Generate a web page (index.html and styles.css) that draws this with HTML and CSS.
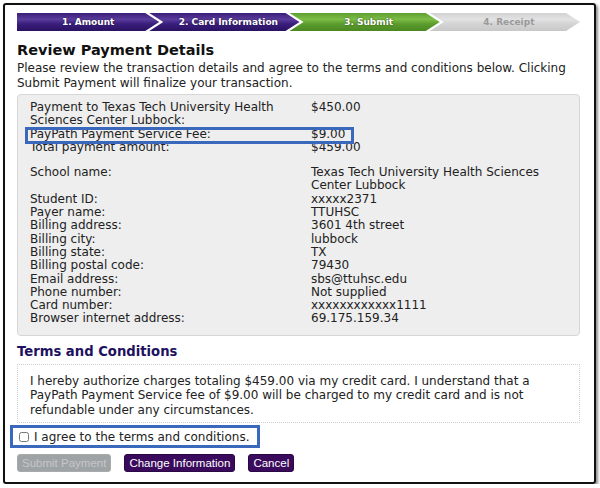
FILE: index.html
```html
<!DOCTYPE html>
<html lang="en">
  <head>
    <meta charset="UTF-8" />
    <meta name="viewport" content="width=device-width, initial-scale=1.0" />
    <title>Review Payment Details</title>
    <link rel="stylesheet" href="styles.css">
  </head>
  <body>
    <div class="frame">
      <div class="steps">
        <div class="step done">1. Amount</div>
        <div class="step done">2. Card Information</div>
        <div class="step current">3. Submit</div>
        <div class="step todo">4. Receipt</div>
      </div>

      <h1 class="title">Review Payment Details</h1>
      <p class="intro">
        Please review the transaction details and agree to the terms and conditions below. Clicking
        Submit Payment will finalize your transaction.
      </p>

      <div class="details">
        <div class="highlight fee-mark"></div>
        <div class="grid">
          <div class="label">Payment to Texas Tech University Health Sciences Center Lubbock:</div>
          <div class="value">$450.00</div>
          <div class="label">PayPath Payment Service Fee:</div>
          <div class="value">$9.00</div>
          <div class="label">Total payment amount:</div>
          <div class="value">$459.00</div>
        </div>
        <div class="grid spaced">
          <div class="label">School name:</div>
          <div class="value">Texas Tech University Health Sciences Center Lubbock</div>
          <div class="label">Student ID:</div>
          <div class="value">xxxxx2371</div>
          <div class="label">Payer name:</div>
          <div class="value">TTUHSC</div>
          <div class="label">Billing address:</div>
          <div class="value">3601 4th street</div>
          <div class="label">Billing city:</div>
          <div class="value">lubbock</div>
          <div class="label">Billing state:</div>
          <div class="value">TX</div>
          <div class="label">Billing postal code:</div>
          <div class="value">79430</div>
          <div class="label">Email address:</div>
          <div class="value">sbs@ttuhsc.edu</div>
          <div class="label">Phone number:</div>
          <div class="value">Not supplied</div>
          <div class="label">Card number:</div>
          <div class="value">xxxxxxxxxxxx1111</div>
          <div class="label">Browser internet address:</div>
          <div class="value">69.175.159.34</div>
        </div>
      </div>

      <h2 class="terms-title">Terms and Conditions</h2>
      <div class="terms">
        I hereby authorize charges totaling $459.00 via my credit card. I understand that a
        PayPath Payment Service fee of $9.00 will be charged to my credit card and is not
        refundable under any circumstances.
      </div>

      <label class="agree">
        <input type="checkbox" />
        <span>I agree to the terms and conditions.</span>
      </label>

      <div class="buttons">
        <button class="btn" disabled>Submit Payment</button>
        <button class="btn">Change Information</button>
        <button class="btn">Cancel</button>
      </div>
    </div>
  </body>
</html>
```

FILE: styles.css
```css
* {
  margin: 0;
  padding: 0;
  box-sizing: border-box;
}
body {
  font-family: "DejaVu Sans", Verdana, sans-serif;
  font-size: 12px;
  color: #222;
  background: #fff;
  padding: 3px 0 0 3px;
}

.frame {
  width: 593px;
  height: 481px;
  border: 2px solid #111;
  border-radius: 3px;
  box-shadow: 2px 2px 3px rgba(0, 0, 0, 0.45);
  padding: 8px 14px 0 12px;
}

.steps {
  display: flex;
  height: 18px;
}

.step {
  flex: 1;
  display: flex;
  align-items: center;
  justify-content: center;
  font-size: 9px;
  font-weight: bold;
  color: #fff;
  text-shadow: 0 0 2px rgba(0, 0, 0, 0.6);
  margin-left: -10px;
  padding-left: 8px;
  clip-path: polygon(0 0, calc(100% - 14px) 0, 100% 50%, calc(100% - 14px) 100%, 0 100%, 14px 50%);
}
.step:first-child {
  margin-left: 0;
  padding-left: 0;
  clip-path: polygon(0 0, calc(100% - 14px) 0, 100% 50%, calc(100% - 14px) 100%, 0 100%);
}
.step.done {
  background: linear-gradient(#3a1d78, #5a3c9c 35%, #3b1f7d 60%, #2a1161);
}
.step.current {
  background: linear-gradient(#5f9f31, #7cbd48 35%, #5c9d2e 60%, #4a8722);
}
.step.todo {
  color: #9a9a9a;
  text-shadow: none;
  background: linear-gradient(#d2d2d2, #e2e2e2 35%, #d4d4d4 60%, #c8c8c8);
}

.title {
  font-size: 14.5px;
  line-height: 18px;
  margin-top: 10px;
  color: #111;
}

.intro {
  margin-top: 2px;
  line-height: 15px;
}

.details {
  position: relative;
  margin-top: 3px;
  background: #eeeeee;
  border: 1px solid #d6d6d6;
  border-radius: 4px;
  padding: 6px 12px 9px 12px;
  line-height: 13.3px;
}

.grid {
  display: grid;
  grid-template-columns: 281px 1fr;
}
.grid.spaced {
  margin-top: 12px;
}
.label {
  padding-right: 28px;
}
.value {
  max-width: 240px;
}

.highlight {
  position: absolute;
  border: 3px solid #3a68bd;
}
.fee-mark {
  left: 7px;
  top: 32px;
  width: 329px;
  height: 17px;
}

.terms-title {
  font-size: 13.2px;
  line-height: 18px;
  margin-top: 7px;
  color: #1e1260;
}

.terms {
  margin-top: 3px;
  border: 1px dotted #cfcfcf;
  padding: 9px 12px 5px 12px;
  line-height: 14.5px;
}

.agree {
  display: inline-flex;
  align-items: center;
  gap: 5px;
  height: 23px;
  margin: 2px 0 0 -7px;
  padding: 0 8px 0 6px;
  border: 3px solid #3a68bd;
}
.agree input {
  width: 10px;
  height: 10px;
  margin: 0;
}

.buttons {
  display: flex;
  gap: 13px;
  margin-top: 6px;
}
.btn {
  font-family: "Liberation Sans", Arial, sans-serif;
  font-size: 11.5px;
  height: 18px;
  padding: 0 4px;
  color: #fff;
  background: #3a0b5c;
  border: 1px solid #2a0645;
  border-radius: 3px;
}
.btn:disabled {
  color: #c6c6c6;
  background: #9ea3a6;
  border-color: #aaa;
}
```
